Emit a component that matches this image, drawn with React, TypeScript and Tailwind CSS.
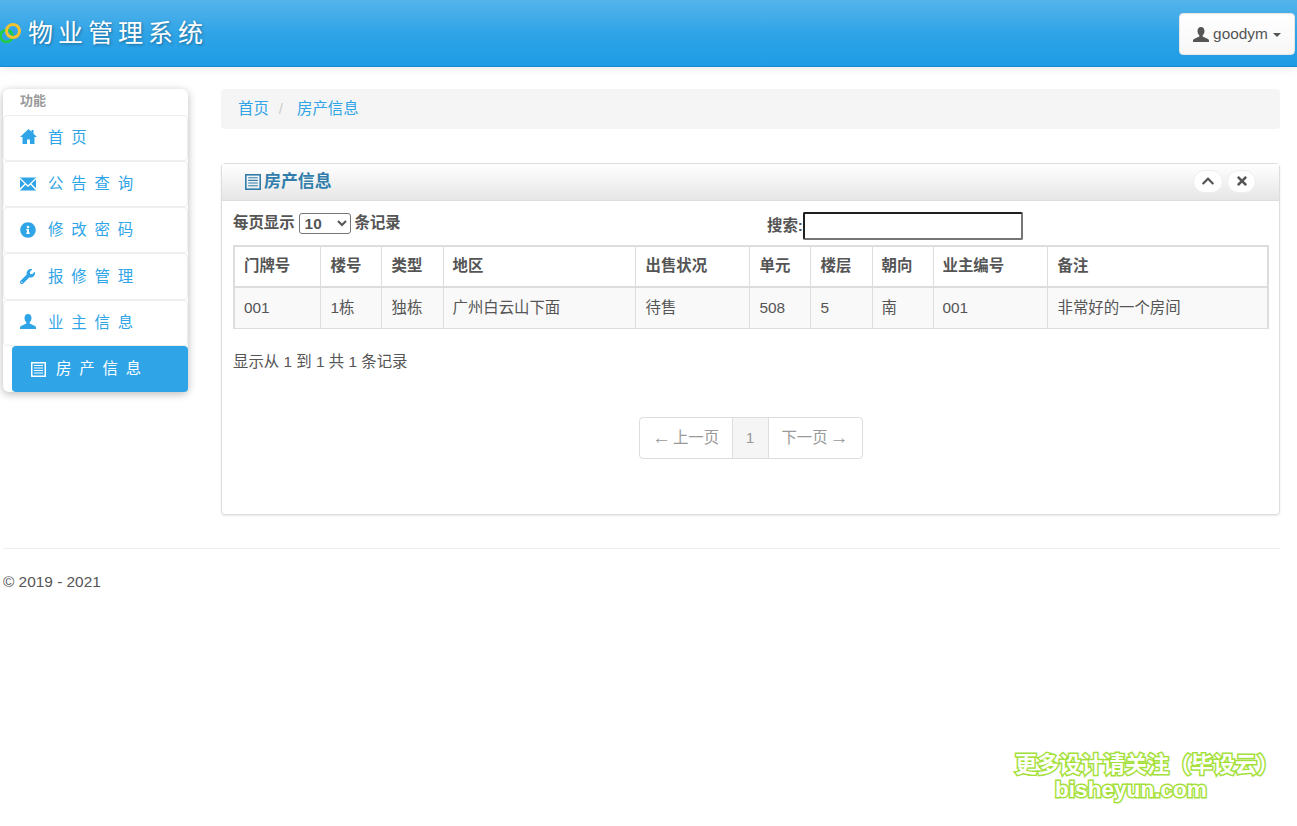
import React from "react";
import { FaInfoCircle, FaWrench, FaChevronUp, FaTimes } from "react-icons/fa";

const Home = ({ className = "" }: { className?: string }) => (
  <svg viewBox="0 0 17 15" className={className} fill="currentColor">
    <path d="M8.5 0L0 8h2.5v7H7v-4.5h3V15h4.5V8H17l-3.5-3.3V1h-2v1.8z" />
  </svg>
);

const User = ({ className = "" }: { className?: string }) => (
  <svg viewBox="0 0 16 15" className={className} fill="currentColor">
    <path d="M8 0C5.6 0 4.5 1.9 4.5 4c0 1.7.8 3.3 1.8 4.3v1.2L1 12c-.7.4-1 1-1 1.6V15h16v-1.4c0-.6-.3-1.2-1-1.6L9.7 9.5V8.3c1-1 1.8-2.6 1.8-4.3C11.5 1.9 10.4 0 8 0z" />
  </svg>
);

const Mail = ({ className = "" }: { className?: string }) => (
  <svg viewBox="0 0 16 12" preserveAspectRatio="none" className={className} fill="currentColor">
    <path d="M0 0.5h16L8 7 0 .5z" />
    <path d="M0 2l4.6 3.8L0 9.6V2zM16 2l-4.6 3.8L16 9.6V2z" />
    <path d="M5.5 6.6L8 8.6l2.5-2L16 11.5H0l5.5-4.9z" />
  </svg>
);

const ListAlt = ({ className = "" }: { className?: string }) => (
  <svg viewBox="0 0 15 15" className={className} fill="none" stroke="currentColor">
    <rect x="0.75" y="0.75" width="13.5" height="13.5" strokeWidth="1.5" />
    <path d="M3 3.5h9M3 6h9M3 8.5h9M3 11h9" strokeWidth="1" />
  </svg>
);

const items: [string, React.ReactNode, string][] = [
  ["首 页", <Home className="mb-[3px] h-[15px] w-[17px]" />, "h-[46px]"],
  ["公 告 查 询", <Mail className="h-[14px] w-[16px]" />, "h-[46px]"],
  ["修 改 密 码", <FaInfoCircle className="h-[16px] w-[16px]" />, "h-[46px]"],
  ["报 修 管 理", <FaWrench className="h-[15px] w-[15px]" />, "h-[47px]"],
  ["业 主 信 息", <User className="mb-[3px] h-[15px] w-[16px]" />, "h-[46px]"],
];

const headers = ["门牌号", "楼号", "类型", "地区", "出售状况", "单元", "楼层", "朝向", "业主编号", "备注"];
const cells = ["001", "1栋", "独栋", "广州白云山下面", "待售", "508", "5", "南", "001", "非常好的一个房间"];
const widths = [86, 61, 62, 192, 114, 61, 62, 61, 114, 221];
const wide = [false, true, true, false, true, true, true, false, false, true];

export default function App() {
  return (
    <div className="relative min-h-[826px] bg-white font-['Liberation_Sans','Noto_Sans_CJK_SC',sans-serif] text-[15.4px] leading-[20px] text-[#555555]">
      <header className="flex h-[67px] items-start justify-between border-b border-[#178acc] bg-gradient-to-b from-[#54b4eb] via-[#2fa4e7] to-[#1d9ce5] shadow-[0_2px_8px_rgba(0,0,0,0.08)]">
        <div className="mt-[14px] flex items-center">
          <svg width="24" height="30" viewBox="0 0 24 30" className="shrink-0">
            <circle cx="6.5" cy="20" r="6" fill="none" stroke="#22cc44" strokeWidth="2.6" />
            <circle cx="13" cy="15" r="6.5" fill="none" stroke="#f2c230" strokeWidth="3" />
          </svg>
          <span className="ml-[4px] font-['Noto_Sans_CJK_SC',sans-serif] text-[25px] leading-[34px] tracking-[5px] text-white [text-shadow:1px_1px_3px_rgba(0,0,0,0.35)]">
            物业管理系统
          </span>
        </div>
        <button className="mr-[2px] mt-[13px] flex h-[42px] w-[116px] items-center justify-center rounded-[4px] border border-[#e6e6e6] bg-gradient-to-b from-white to-[#f7f7f7] text-[#555555]">
          <User className="mr-[4px] h-[15px] w-[16px]" />
          goodym
          <span className="ml-[5px] mt-[2px] h-0 w-0 border-x-[4px] border-t-[4px] border-x-transparent border-t-[#555555]" />
        </button>
      </header>

      <div className="flex items-start gap-[33px] pl-[3px] pr-[17px] pt-[22px]">
        <aside className="w-[185px] shrink-0 rounded-[6px] bg-white shadow-[0_2px_8px_rgba(0,0,0,0.28)]">
          <div className="h-[26px] pl-[17px] pt-[3px] text-[13px] font-bold leading-[18px] text-[#999999]">功能</div>
          {items.map(([label, icon, h]) => (
            <div key={label} className={`${h} flex items-center rounded-[4px] border border-[#eeeeee] pl-[16px] text-[#2fa4e7]`}>
              <span className="flex w-[28px] items-center">{icon}</span>
              <span className="tracking-[1.8px]">{label}</span>
            </div>
          ))}
          <div className="ml-[9px] flex h-[46px] items-center rounded-[4px] bg-[#2fa4e7] pl-[19px] text-white">
            <span className="flex w-[25px] items-center">
              <ListAlt className="h-[15px] w-[15px]" />
            </span>
            <span className="tracking-[1.8px]">房 产 信 息</span>
          </div>
        </aside>

        <main className="min-w-0 flex-1">
          <nav className="flex h-[40px] items-center rounded-[4px] bg-[#f5f5f5] pb-[1px] pl-[17px] text-[#2fa4e7]">
            <span>首页</span>
            <span className="ml-[10px] mr-[14px] text-[#cccccc]">/</span>
            <span>房产信息</span>
          </nav>

          <section className="mt-[34px] h-[352px] rounded-[4px] border border-[#dddddd] shadow-[0_1px_2px_rgba(0,0,0,0.1)]">
            <div className="flex h-[37px] items-center justify-between border-b border-[#dedede] bg-gradient-to-b from-white to-[#e6e6e6] pl-[23px] pr-[23px]">
              <h2 className="flex items-center pb-[1px] text-[16.9px] font-bold text-[#317eac]">
                <ListAlt className="mr-[3px] h-[16px] w-[16px]" />
                房产信息
              </h2>
              <div className="flex gap-[4px] pb-[2px]">
                <span className="flex h-[23px] w-[30px] items-center justify-center rounded-full border border-[#eeeeee] bg-white text-[#555555]">
                  <FaChevronUp className="h-[14px] w-[14px]" />
                </span>
                <span className="flex h-[23px] w-[29px] items-center justify-center rounded-full border border-[#eeeeee] bg-white text-[#555555]">
                  <FaTimes className="h-[14px] w-[14px]" />
                </span>
              </div>
            </div>

            <div className="px-[11px]">
              <div className="flex h-[44px] items-start">
                <label className="mt-[11px] flex h-[22px] w-[534px] items-center font-bold">
                  每页显示
                  <select className="mx-[4px] h-[21px] w-[52px] rounded-[3px] border border-[#767676] bg-white pl-[1px] text-[15.4px] font-bold text-[#555555]">
                    <option>10</option>
                  </select>
                  条记录
                </label>
                <label className="mt-[11px] flex h-[28px] items-center font-bold">
                  搜索:
                  <input className="h-[28px] w-[220px] rounded-[2px] border-2 border-b-[#767676] border-l-[#1f1f1f] border-r-[#767676] border-t-[#1f1f1f] bg-white" />
                </label>
              </div>

              <table className="w-[1034px] table-fixed border-collapse border-x-2 border-b border-t-2 border-[#dddddd]">
                <colgroup>
                  {widths.map((w, i) => (
                    <col key={i} style={{ width: w }} />
                  ))}
                </colgroup>
                <thead>
                  <tr className="h-[41px]">
                    {headers.map((h, i) => (
                      <th key={h} className={`${wide[i] ? "pl-[10px]" : "pl-[9px]"} border border-b-2 border-[#dddddd] pb-[1px] pr-[9px] text-left font-bold`}>
                        {h}
                      </th>
                    ))}
                  </tr>
                </thead>
                <tbody>
                  <tr className="h-[41px] bg-[#f9f9f9]">
                    {cells.map((c, i) => (
                      <td key={i} className={`${wide[i] ? "pl-[10px]" : "pl-[9px]"} border border-[#dddddd] pr-[9px] pt-[1px]`}>
                        {c}
                      </td>
                    ))}
                  </tr>
                </tbody>
              </table>

              <p className="mt-[23px]">显示从 1 到 1 共 1 条记录</p>

              <div className="mt-[45px] flex justify-center text-[#999999]">
                <div className="flex h-[42px] items-stretch rounded-[4px] border border-[#dddddd]">
                  <span className="flex w-[92px] items-center justify-center gap-[2px]">
                    <span className="text-[19px]">←</span>
                    <span>上一页</span>
                  </span>
                  <span className="flex w-[37px] items-center justify-center border-x border-[#dddddd] bg-[#f5f5f5]">1</span>
                  <span className="flex w-[93px] items-center justify-center gap-[2px]">
                    <span>下一页</span>
                    <span className="text-[19px]">→</span>
                  </span>
                </div>
              </div>
            </div>
          </section>
        </main>
      </div>

      <footer className="mt-[33px] pl-[3px] pr-[17px]">
        <div className="border-t border-[#eeeeee] pt-[23px]">© 2019 - 2021</div>
      </footer>

      <div className="absolute left-[1015px] top-[747px] w-[260px] text-center font-['Noto_Sans_CJK_SC',sans-serif] font-bold text-white [-webkit-text-stroke:3px_#a4e03a] [paint-order:stroke_fill]">
        <div className="whitespace-nowrap text-left text-[22px] leading-[30px]">更多设计请关注（毕设云）</div>
        <div className="mr-[28px] mt-[1px] font-['Liberation_Sans',sans-serif] text-[22.6px] leading-[24px]">bisheyun.com</div>
      </div>
    </div>
  );
}
